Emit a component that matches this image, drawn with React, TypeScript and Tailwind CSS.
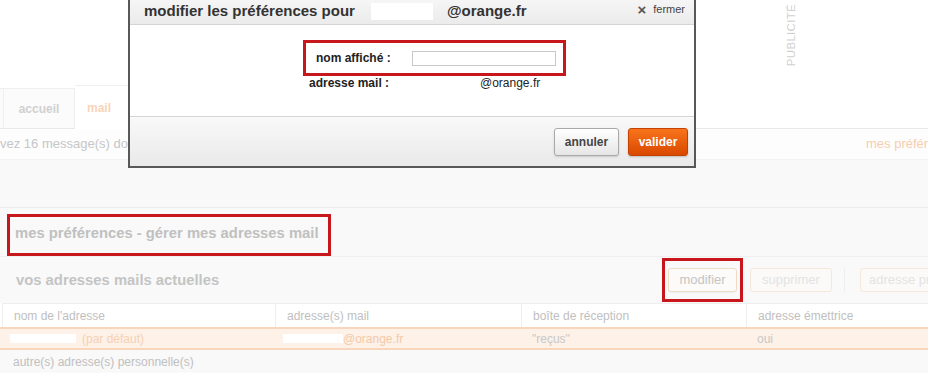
export default function App() {
  return (
    <div className="relative h-[373px] w-[928px] overflow-hidden bg-white font-['Liberation_Sans',Arial,sans-serif]">
      {/* top banner */}
      <div className="flex h-[85px] items-start pl-[785px] pt-[4px]">
        <div className="rotate-180 text-[11.5px] leading-[13px] tracking-[0.3px] text-[#d0d0d0] [writing-mode:vertical-rl]">
          PUBLICITÉ
        </div>
      </div>

      {/* tabs */}
      <div className="flex h-[44px] items-end border-b border-[#e8e8e8]">
        <div className="h-[40px] w-[4px] border-r border-t border-[#efefef] bg-[#fbfbfb]" />
        <div className="flex h-[40px] w-[71px] items-center justify-center border-r border-t border-[#efefef] bg-[#fbfbfb] text-[12px] font-bold text-[#d0d0d0]">
          accueil
        </div>
        <div className="mb-[-1px] flex h-[44px] w-[60px] items-center border-r border-t border-[#efefef] bg-white pl-[12px] text-[12px] font-bold text-[#f8d4b8]">
          mail
        </div>
      </div>

      {/* info row */}
      <div className="flex h-[31px] items-center border-b border-[#f3f3f3] bg-[#fdfdfd] text-[13px]">
        <span className="whitespace-nowrap text-[#c6c6c6]">vez 16 message(s) dont 0 non lu(s)</span>
        <span className="ml-auto w-[62px] overflow-hidden whitespace-nowrap text-[#f7cdb0]">mes préférences</span>
      </div>

      {/* grey band */}
      <div className="h-[48px] border-b border-[#ececec] bg-[#f9f9f9]" />

      {/* heading */}
      <div className="h-[49px] border-b border-[#efefef] bg-[#f9f9f9] pl-[7px] pt-[6px]">
        <div className="flex h-[42px] w-[324px] items-center border-[3px] border-[#c8161d] pb-[4px] pl-[5px] text-[14.8px] font-bold text-[#c0c0c0]">
          mes préférences - gérer mes adresses mail
        </div>
      </div>

      {/* addresses header */}
      <div className="flex h-[46px] items-center overflow-hidden bg-[#f9f9f9]">
        <div className="w-[662px] shrink-0 pl-[16px] text-[14.8px] font-bold text-[#c4c4c4]">vos adresses mails actuelles</div>
        <div className="flex shrink-0 items-center">
          <div className="flex h-[44px] w-[81px] items-center justify-center border-[3px] border-[#c8161d]">
            <div className="flex h-[24px] w-[69px] items-center justify-center rounded-[3px] border border-[#efdcc4] bg-[#fcfbf9] text-[13px] text-[#c4c4c4] shadow-[0_1px_1px_rgba(0,0,0,0.04)]">
              modifier
            </div>
          </div>
          <div className="ml-[7px] flex h-[24px] w-[82px] items-center justify-center rounded-[3px] border border-[#f4e8d8] bg-[#fbfaf9] text-[13px] text-[#e3e3e3]">
            supprimer
          </div>
          <div className="ml-[12px] h-[24px] w-px bg-[#eeeeee]" />
          <div className="ml-[15px] flex h-[24px] w-[110px] items-center whitespace-nowrap rounded-[3px] border border-[#f4e8d8] bg-[#fbfaf9] pl-[8px] text-[13px] text-[#e3e3e3]">
            adresse principale
          </div>
        </div>
      </div>

      {/* table */}
      <div className="ml-[2px] grid grid-cols-[273px_246px_225px_1fr] border-l border-t border-[#eeeeee] bg-white text-[12px] text-[#c0c0c0]">
        <div className="flex h-[23px] items-center border-r border-[#eeeeee] pl-[11px]">nom de l'adresse</div>
        <div className="flex h-[23px] items-center border-r border-[#eeeeee] pl-[11px]">adresse(s) mail</div>
        <div className="flex h-[23px] items-center border-r border-[#eeeeee] pl-[11px]">boîte de réception</div>
        <div className="flex h-[23px] items-center pl-[11px]">adresse émettrice</div>
      </div>
      <div className="grid h-[23px] grid-cols-[275px_246px_225px_1fr] border-y-2 border-[#f7d6bd] bg-[#fdf1e8] text-[12px]">
        <div className="flex items-center pl-[10px]">
          <span className="h-[9px] w-[66px] bg-white" />
          <span className="ml-[6px] text-[#f6d0b2]">(par défaut)</span>
        </div>
        <div className="flex items-center pl-[8px]">
          <span className="h-[9px] w-[60px] bg-white" />
          <span className="text-[#f4c9a8]">@orange.fr</span>
        </div>
        <div className="flex items-center pl-[11px] text-[#c8c8c8]">"reçus"</div>
        <div className="flex items-center pl-[11px] text-[#c8c8c8]">oui</div>
      </div>
      <div className="flex h-[24px] items-center bg-[#f9f9f9] pl-[13px] text-[12px] text-[#c0c0c0]">
        autre(s) adresse(s) personnelle(s)
      </div>

      {/* modal dialog */}
      <div className="absolute left-[128px] top-[-8px] flex h-[176px] w-[568px] flex-col border-2 border-[#585858] bg-white">
        <div className="flex h-[31px] shrink-0 items-center border-b border-[#d4d4d4] bg-gradient-to-b from-[#f8f8f8] to-[#ebebeb] pl-[14px] pr-[9px] pt-[5px]">
          <span className="text-[15px] font-bold text-[#333]">modifier les préférences pour</span>
          <span className="ml-[16px] h-[17px] w-[62px] bg-white" />
          <span className="ml-[14px] text-[15px] font-bold text-[#333]">@orange.fr</span>
          <span className="ml-auto flex items-center pb-[4px] text-[11px] text-[#444]">
            <span className="text-[15px] font-bold leading-none text-[#555]">×</span>
            <span className="ml-[7px]">fermer</span>
          </span>
        </div>
        <div className="h-[92px] shrink-0 border-b border-[#d4d4d4] bg-white pl-[173px] pt-[15px] text-[12px] text-[#222]">
          <div className="flex h-[36px] w-[263px] items-center border-[3px] border-[#c8161d] pl-[10px]">
            <span className="w-[96px] font-bold">nom affiché :</span>
            <div className="h-[15px] w-[144px] border border-[#c8c8c8] bg-white" />
          </div>
          <div className="flex h-[14px] items-center pl-[6px]">
            <span className="w-[171px] font-bold">adresse mail :</span>
            <span>@orange.fr</span>
          </div>
        </div>
        <div className="flex flex-1 items-center justify-end gap-[9px] bg-gradient-to-b from-[#f9f9f9] to-[#e9e9e9] pr-[6px]">
          <button className="flex h-[28px] w-[65px] items-center justify-center rounded-[3px] border border-[#a9a9a9] bg-gradient-to-b from-white to-[#e6e6e6] text-[12px] font-bold text-[#444] shadow-[0_1px_2px_rgba(0,0,0,0.15)]">
            annuler
          </button>
          <button className="flex h-[28px] w-[60px] items-center justify-center rounded-[3px] border border-[#c44100] bg-gradient-to-b from-[#f7741a] to-[#d94800] text-[12px] font-bold text-white shadow-[0_1px_2px_rgba(0,0,0,0.2)]">
            valider
          </button>
        </div>
      </div>
    </div>
  );
}
